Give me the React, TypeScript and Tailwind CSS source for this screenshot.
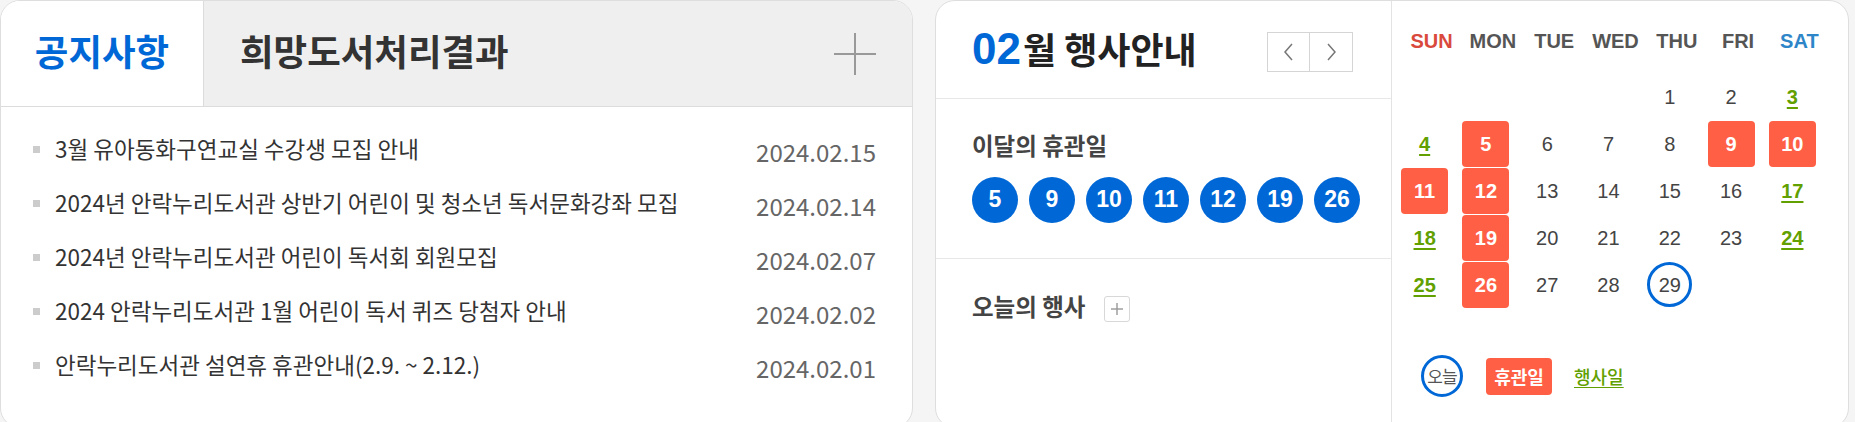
const notices = [
  { title: "3월 유아동화구연교실 수강생 모집 안내", date: "2024.02.15" },
  { title: "2024년 안락누리도서관 상반기 어린이 및 청소년 독서문화강좌 모집", date: "2024.02.14" },
  { title: "2024년 안락누리도서관 어린이 독서회 회원모집", date: "2024.02.07" },
  { title: "2024 안락누리도서관 1월 어린이 독서 퀴즈 당첨자 안내", date: "2024.02.02" },
  { title: "안락누리도서관 설연휴 휴관안내(2.9. ~ 2.12.)", date: "2024.02.01" },
];

const closedDays = [5, 9, 10, 11, 12, 19, 26];
const weekDays = ["SUN", "MON", "TUE", "WED", "THU", "FRI", "SAT"];
const today = 29;

const ko = { fontFamily: '"Noto Sans CJK KR", "Noto Sans", sans-serif' };
const ar = { fontFamily: '"Liberation Sans", Arial, sans-serif' };

function dayCells() {
  const cells: (number | null)[] = [null, null, null, null];
  for (let d = 1; d <= 29; d++) cells.push(d);
  return cells;
}

function DayCell({ day, col }: { day: number | null; col: number }) {
  if (day === null) return <div className="h-[47px]" />;
  const closed = closedDays.includes(day);
  const weekend = col === 0 || col === 6;
  return (
    <div className="h-[47px] flex items-center justify-center">
      {closed ? (
        <span className="w-[47px] h-[46px] rounded-[4px] bg-[#ff5f45] text-white font-bold flex items-center justify-center">
          {day}
        </span>
      ) : day === today ? (
        <span className="w-[45px] h-[45px] rounded-full border-[3px] border-[#0068d6] text-[#444] flex items-center justify-center">
          {day}
        </span>
      ) : weekend ? (
        <span className="text-[#62a000] font-bold underline underline-offset-[3px]">{day}</span>
      ) : (
        <span className="text-[#444]">{day}</span>
      )}
    </div>
  );
}

export default function App() {
  const cells = dayCells();
  return (
    <div className="w-[1855px] h-[422px] bg-[#f5f5f5] flex gap-[22px] overflow-hidden" style={ko}>
      {/* 공지사항 */}
      <div className="w-[913px] h-[428px] shrink-0 bg-white border border-[#dedede] rounded-[20px] overflow-hidden flex flex-col">
        <div className="h-[106px] flex border-b border-[#dcdcdc]">
          <div className="w-[203px] flex items-center justify-center border-r border-[#dcdcdc] bg-white">
            <span className="text-[36.5px] font-semibold text-[#0068d6] leading-none mt-[-4px]">공지사항</span>
          </div>
          <div className="flex-1 bg-[#efefef] flex items-center justify-between pl-[36px] pr-[36px]">
            <span className="text-[36.5px] font-semibold text-[#333] leading-none mt-[-4px]">희망도서처리결과</span>
            <svg width="42" height="42" viewBox="0 0 42 42">
              <line x1="0" y1="21" x2="42" y2="21" stroke="#999" strokeWidth="2" />
              <line x1="21" y1="0" x2="21" y2="42" stroke="#999" strokeWidth="2" />
            </svg>
          </div>
        </div>
        <ul className="pt-[15px] pl-[32px] pr-[36px]">
          {notices.map((n) => (
            <li key={n.date} className="h-[54px] flex items-center">
              <span className="w-[7px] h-[7px] bg-[#cccccc] shrink-0" />
              <span className="ml-[15px] text-[22.5px] text-[#333] flex-1 whitespace-nowrap">{n.title}</span>
              <span className="text-[24px] text-[#666] mt-[5px]">{n.date}</span>
            </li>
          ))}
        </ul>
      </div>

      {/* 행사안내 */}
      <div className="w-[914px] h-[428px] shrink-0 bg-white border border-[#dedede] rounded-[20px] overflow-hidden flex">
        <div className="w-[456px] shrink-0 border-r border-[#e3e3e3] flex flex-col">
          <div className="h-[98px] border-b border-[#e8e8e8] flex items-center justify-between pl-[36px] pr-[38px]">
            <div className="flex items-baseline mt-[-2px]">
              <span className="text-[44px] font-bold text-[#0068d6] leading-none" style={ar}>02</span>
              <span className="text-[36px] font-bold text-[#222] leading-none ml-[2px]">월 행사안내</span>
            </div>
            <div className="flex border border-[#d5d5d5] mt-[4px]">
              <button className="w-[42px] h-[38px] flex items-center justify-center border-r border-[#d5d5d5]">
                <svg width="11" height="18" viewBox="0 0 11 18">
                  <polyline points="9,1 2,9 9,17" fill="none" stroke="#777" strokeWidth="1.5" />
                </svg>
              </button>
              <button className="w-[42px] h-[38px] flex items-center justify-center">
                <svg width="11" height="18" viewBox="0 0 11 18">
                  <polyline points="2,1 9,9 2,17" fill="none" stroke="#777" strokeWidth="1.5" />
                </svg>
              </button>
            </div>
          </div>
          <div className="h-[160px] border-b border-[#e8e8e8] pl-[36px] pt-[35px]">
            <div className="text-[23.5px] font-semibold text-[#444] leading-none">이달의 휴관일</div>
            <div className="flex gap-[11px] mt-[19px]">
              {closedDays.map((d) => (
                <span
                  key={d}
                  className="w-[46px] h-[46px] rounded-full bg-[#0068d6] text-white text-[23px] font-bold flex items-center justify-center"
                  style={ar}
                >
                  {d}
                </span>
              ))}
            </div>
          </div>
          <div className="pl-[36px] pt-[33px] flex items-center">
            <span className="text-[23.5px] font-semibold text-[#444] leading-none">오늘의 행사</span>
            <span className="ml-[19px] w-[26px] h-[26px] border border-[#d8d8d8] rounded-[3px] flex items-center justify-center mt-[4px]">
              <svg width="12" height="12" viewBox="0 0 12 12">
                <line x1="0" y1="6" x2="12" y2="6" stroke="#999" strokeWidth="1.4" />
                <line x1="6" y1="0" x2="6" y2="12" stroke="#999" strokeWidth="1.4" />
              </svg>
            </span>
          </div>
        </div>

        <div className="flex-1 flex flex-col" style={ar}>
          <div className="grid grid-cols-7 w-[429px] ml-[9px] mt-[25px] h-[24px] items-center text-[20px] font-bold text-center">
            {weekDays.map((w, i) => (
              <span
                key={w}
                className={i === 0 ? "text-[#d9493c]" : i === 6 ? "text-[#2e86c8]" : "text-[#555]"}
              >
                {w}
              </span>
            ))}
          </div>
          <div className="grid grid-cols-7 w-[429px] ml-[2px] mt-[23px] text-[20px]">
            {cells.map((d, i) => (
              <DayCell key={i} day={d} col={i % 7} />
            ))}
          </div>
          <div className="flex items-center mt-[47px] pl-[29px]" style={ko}>
            <span className="w-[42px] h-[42px] rounded-full border-[3px] border-[#0068d6] text-[17px] text-[#555] flex items-center justify-center tracking-[-1px]">
              오늘
            </span>
            <span className="ml-[23px] w-[66px] h-[37px] rounded-[4px] bg-[#ff5f45] text-white text-[18px] font-bold flex items-center justify-center">
              휴관일
            </span>
            <span className="ml-[22px] text-[18px] font-medium text-[#62a000] underline underline-offset-[3px]">행사일</span>
          </div>
        </div>
      </div>
    </div>
  );
}
